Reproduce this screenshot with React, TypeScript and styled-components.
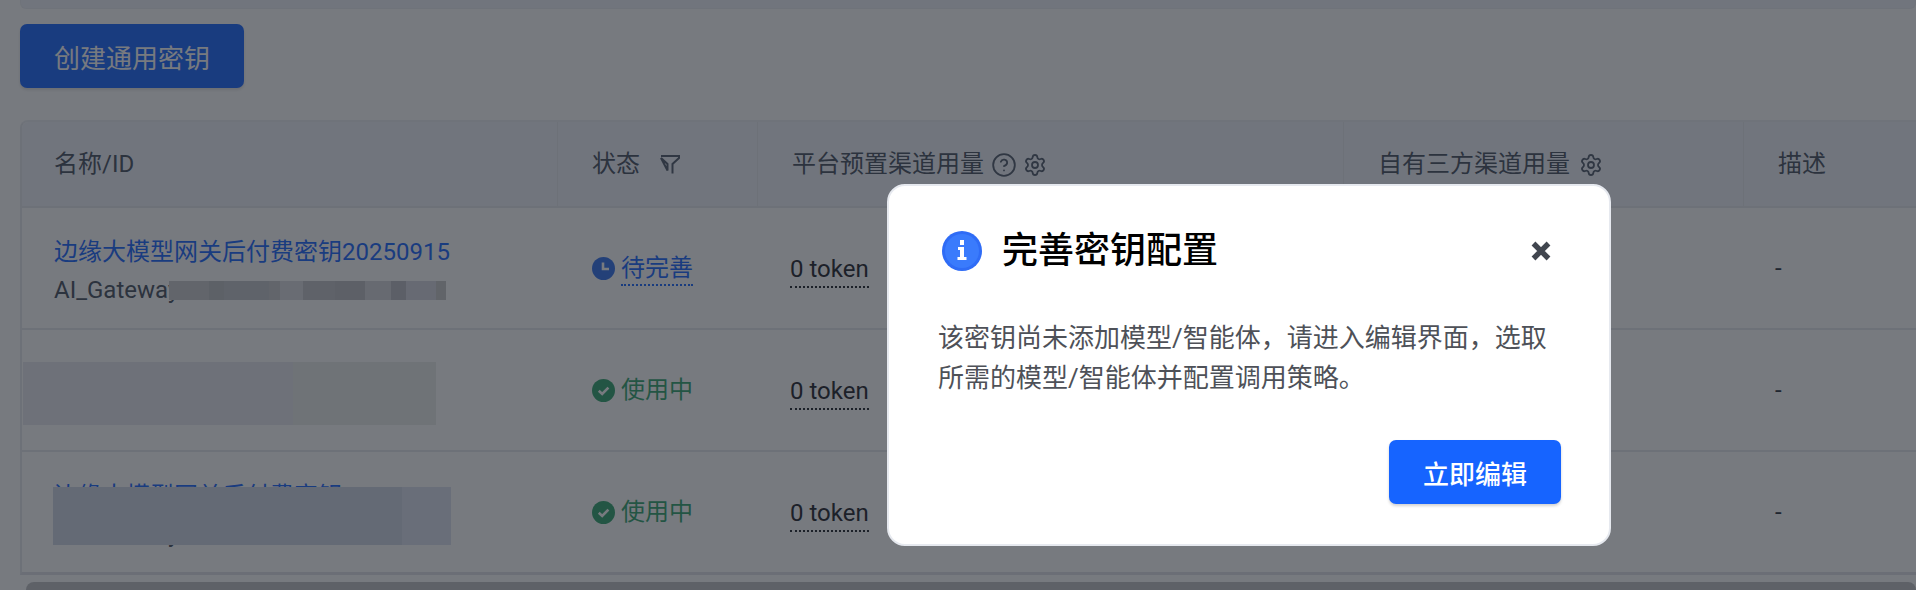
import React from 'react';
import styled, { createGlobalStyle } from 'styled-components';
import { CircleHelp, Settings } from 'lucide-react';

const GlobalStyle = createGlobalStyle`
  html, body { margin: 0; padding: 0; background: #fff; }
  body { width: 1916px; height: 590px; overflow: hidden; font-family: Roboto, "Noto Sans CJK SC", sans-serif; }
  * { box-sizing: border-box; }
`;

const Page = styled.div`
  position: relative;
  width: 1916px;
  height: 590px;
  overflow: hidden;
  padding-left: 20px;
  background: #fff;
`;
const TopStrip = styled.div`
  height: 9px;
  background: #f1f3fa;
  border: 1px solid #eceef3;
  border-top: 0;
  border-radius: 0 0 6px 6px;
`;
const CreateButton = styled.button`
  display: block;
  width: 224px;
  height: 64px;
  margin-top: 15px;
  padding: 0;
  border: 0;
  border-radius: 7px;
  background: #1664ff;
  color: #fff;
  font: 400 26px Roboto, "Noto Sans CJK SC", sans-serif;
  box-shadow: 0 2px 3px rgba(0, 0, 0, 0.12);
`;
const Table = styled.div`
  width: 1896px;
  margin-top: 32px;
  border-left: 2px solid #e6e8ee;
  border-top: 2px solid #eceef3;
  border-bottom: 3px solid #e0e2e8;
  border-top-left-radius: 8px;
  overflow: hidden;
`;
const HeaderRow = styled.div`
  display: grid;
  grid-template-columns: 536px 200px 586px 400px 1fr;
  height: 86px;
  background: #f1f3fa;
  border-bottom: 2px solid #e6e8ee;
`;
const HeaderCell = styled.div`
  display: flex;
  align-items: center;
  padding-left: ${p => p.$pad ?? 34}px;
  border-right: ${p => (p.$last ? 0 : 1)}px solid #e6e8ee;
  color: #454e5e;
  font-size: 24px;
  font-weight: 400;
`;
const HeaderLabel = styled.span`
  line-height: 32px;
`;
const HelpIcon = styled(CircleHelp)`
  margin-left: 7px;
  margin-top: 2px;
  color: #4e5969;
`;
const GearIcon = styled(Settings)`
  margin-left: ${p => p.$gap ?? 6}px;
  margin-top: 2px;
  color: #4e5969;
`;
const FilterIcon = styled.svg`
  width: 22px;
  height: 22px;
  margin-left: 19px;
  color: #4e5969;
`;
const Row = styled.div`
  position: relative;
  display: grid;
  grid-template-columns: 536px 200px 586px 400px 1fr;
  height: 122px;
  border-bottom: 2px solid #e6e8ee;
  &:last-of-type { border-bottom: 0; height: 120px; }
`;
const Cell = styled.div`
  display: flex;
  align-items: center;
  padding-left: ${p => p.$pad}px;
  font-size: 24px;
  color: #272e3b;
`;
const NameCell = styled.div`
  display: flex;
  flex-direction: column;
  justify-content: center;
  padding: 6px 0 0 32px;
  font-size: 24px;
  line-height: 39px;
`;
const NameLink = styled.div`
  margin: 1px 0 -1px;
  color: #1664ff;
  white-space: nowrap;
  visibility: ${p => (p.$masked ? 'hidden' : 'visible')};
`;
const FaintDigits = styled.span`
  color: #c4c6cc;
`;
const SecretId = styled.div`
  display: flex;
  align-items: center;
  color: #454e5e;
  white-space: nowrap;
  height: 39px;
`;
const Mosaic = styled.span`
  display: flex;
  height: 19px;
  margin-left: -10px;
`;
const Tile = styled.i`
  display: block;
  width: ${p => p.$w}px;
  background: ${p => p.$c};
`;
const Redaction = styled.div`
  position: absolute;
  left: ${p => p.$x}px;
  top: ${p => p.$y}px;
  width: ${p => p.$w}px;
  height: ${p => p.$h}px;
  background: ${p => p.$bg};
`;
const Status = styled.div`
  display: flex;
  align-items: center;
  gap: 6px;
  color: ${p => p.$c};
`;
const StatusText = styled.span`
  line-height: 32px;
  border-bottom: ${p => (p.$dotted ? '2px dotted currentColor' : '0')};
  margin-top: ${p => (p.$dotted ? 2 : 0)}px;
`;
const StatusIcon = styled.svg`
  width: 23px;
  height: 23px;
  flex: none;
`;
const TokenValue = styled.span`
  line-height: 34px;
  margin-top: 4px;
  border-bottom: 2px dotted #1d2129;
  color: #1d2129;
`;
const ScrollThumb = styled.div`
  width: 1890px;
  height: 16px;
  margin: 7px 0 0 6px;
  background: #c0c1c4;
  border-radius: 8px;
`;
const Overlay = styled.div`
  position: absolute;
  inset: 0;
  background: rgba(29, 33, 41, 0.6);
`;
const Modal = styled.div`
  position: absolute;
  left: 887px;
  top: 184px;
  width: 724px;
  height: 362px;
  padding: 45px 48px 40px 49px;
  background: #fff;
  border: 2px solid #e6e9ef;
  border-radius: 18px;
`;
const ModalHead = styled.div`
  display: flex;
  align-items: center;
  height: 40px;
  padding-left: 4px;
`;
const ModalIcon = styled.svg`
  width: 40px;
  height: 40px;
  flex: none;
`;
const ModalTitle = styled.h2`
  flex: 1;
  margin: 0 0 0 20px;
  color: #000;
  font-size: 36px;
  line-height: 48px;
  font-weight: 500;
`;
const CloseIcon = styled.svg`
  width: 20px;
  height: 20px;
  margin-right: 10px;
  flex: none;
`;
const ModalBody = styled.p`
  margin: 47px 0 0;
  color: #4e5158;
  font-size: 26px;
  line-height: 40px;
`;
const ModalFoot = styled.div`
  display: flex;
  justify-content: flex-end;
  margin-top: 42px;
`;
const PrimaryButton = styled.button`
  width: 172px;
  height: 64px;
  padding: 0;
  border: 0;
  border-radius: 7px;
  background: #1664ff;
  color: #fff;
  font: 500 26px Roboto, "Noto Sans CJK SC", sans-serif;
  box-shadow: 0 2px 3px rgba(0, 0, 0, 0.18);
`;

const tiles: [number, string][] = [
  [40, '#cacbce'], [15, '#bfc1c4'], [45, '#c4c6cb'], [11, '#cacbce'], [23, '#dbdce0'], [32, '#c2c4c9'],
  [30, '#bdbfc2'], [26, '#d8d8db'], [15, '#bbbcc4'], [30, '#d6d8e0'], [10, '#c7c9c9'],
];

const ClockIcon = () => (
  <StatusIcon viewBox="0 0 23 23">
    <circle cx="11.5" cy="11.5" r="11.5" fill="#2f6fee" />
    <path d="M11 5.5V12H17" fill="none" stroke="#fff" strokeWidth="2.6" />
  </StatusIcon>
);
const CheckIcon = () => (
  <StatusIcon viewBox="0 0 23 23">
    <circle cx="11.5" cy="11.5" r="11.5" fill="#2fa36c" />
    <path d="M6.8 11.8L10.2 15L16.4 8.6" fill="none" stroke="#fff" strokeWidth="2.6" />
  </StatusIcon>
);

const Token = () => (
  <Cell $pad={32}>
    <TokenValue>0 token</TokenValue>
  </Cell>
);

const Dash = () => <Cell $pad={31}>-</Cell>;

const App = () => (
  <Page>
    <GlobalStyle />
    <TopStrip />
    <CreateButton>创建通用密钥</CreateButton>
    <Table>
      <HeaderRow>
        <HeaderCell $pad={32}><HeaderLabel>名称/ID</HeaderLabel></HeaderCell>
        <HeaderCell>
          <HeaderLabel>状态</HeaderLabel>
          <FilterIcon viewBox="0 0 22 22" fill="none" stroke="currentColor" strokeWidth="2">
            <path d="M2 3H20V5L13.5 11V20.5M8.5 17.5V11L2 5Z" />
          </FilterIcon>
        </HeaderCell>
        <HeaderCell>
          <HeaderLabel>平台预置渠道用量</HeaderLabel>
          <HelpIcon size={26} strokeWidth={1.7} />
          <GearIcon size={24} strokeWidth={1.8} $gap={6} />
        </HeaderCell>
        <HeaderCell>
          <HeaderLabel>自有三方渠道用量</HeaderLabel>
          <GearIcon size={24} strokeWidth={1.8} $gap={9} />
        </HeaderCell>
        <HeaderCell $last><HeaderLabel>描述</HeaderLabel></HeaderCell>
      </HeaderRow>

      <Row>
        <NameCell>
          <NameLink>边缘大模型网关后付费密钥20250915</NameLink>
          <SecretId>
            AI_Gateway
            <Mosaic>{tiles.map(([w, c], i) => <Tile key={i} $w={w} $c={c} />)}</Mosaic>
          </SecretId>
        </NameCell>
        <Cell $pad={34}>
          <Status $c="#1664ff"><ClockIcon /><StatusText $dotted>待完善</StatusText></Status>
        </Cell>
        <Token />
        <Cell $pad={31} />
        <Dash />
      </Row>

      <Row>
        <NameCell>
          <NameLink $masked>边缘大模型网关后付费密钥20250915</NameLink>
          <SecretId>AI_Gateway</SecretId>
        </NameCell>
        <Cell $pad={34}>
          <Status $c="#2fa36c"><CheckIcon /><StatusText>使用中</StatusText></Status>
        </Cell>
        <Token />
        <Cell $pad={31} />
        <Dash />
        <Redaction $x={1} $y={32} $w={413} $h={63} $bg="linear-gradient(90deg, #e8e9f1 0 270px, #ecedeb 270px)" />
      </Row>

      <Row>
        <NameCell>
          <NameLink>边缘大模型网关后付费密钥<FaintDigits>20250915</FaintDigits></NameLink>
          <SecretId>AI_Gateway</SecretId>
        </NameCell>
        <Cell $pad={34}>
          <Status $c="#2fa36c"><CheckIcon /><StatusText>使用中</StatusText></Status>
        </Cell>
        <Token />
        <Cell $pad={31} />
        <Dash />
        <Redaction $x={31} $y={35} $w={398} $h={58} $bg="linear-gradient(90deg, #cfd6e6 0 349px, #dce0ef 349px)" />
      </Row>
    </Table>
    <ScrollThumb />
    <Overlay />
    <Modal>
      <ModalHead>
        <ModalIcon viewBox="0 0 40 40">
          <circle cx="20" cy="20" r="20" fill="#2f6cf6" />
          <circle cx="20" cy="20" r="17" fill="#3a7bfc" />
          <path d="M18 9h4v5h-4zM16 16h6v10h2.5v3h-9v-3H18v-7h-2z" fill="#fff" />
        </ModalIcon>
        <ModalTitle>完善密钥配置</ModalTitle>
        <CloseIcon viewBox="0 0 20 20">
          <path d="M2.5 2.5L17.5 17.5M17.5 2.5L2.5 17.5" stroke="#41464f" strokeWidth="5.4" fill="none" />
        </CloseIcon>
      </ModalHead>
      <ModalBody>该密钥尚未添加模型/智能体，请进入编辑界面，选取所需的模型/智能体并配置调用策略。</ModalBody>
      <ModalFoot>
        <PrimaryButton>立即编辑</PrimaryButton>
      </ModalFoot>
    </Modal>
  </Page>
);

export default App;
